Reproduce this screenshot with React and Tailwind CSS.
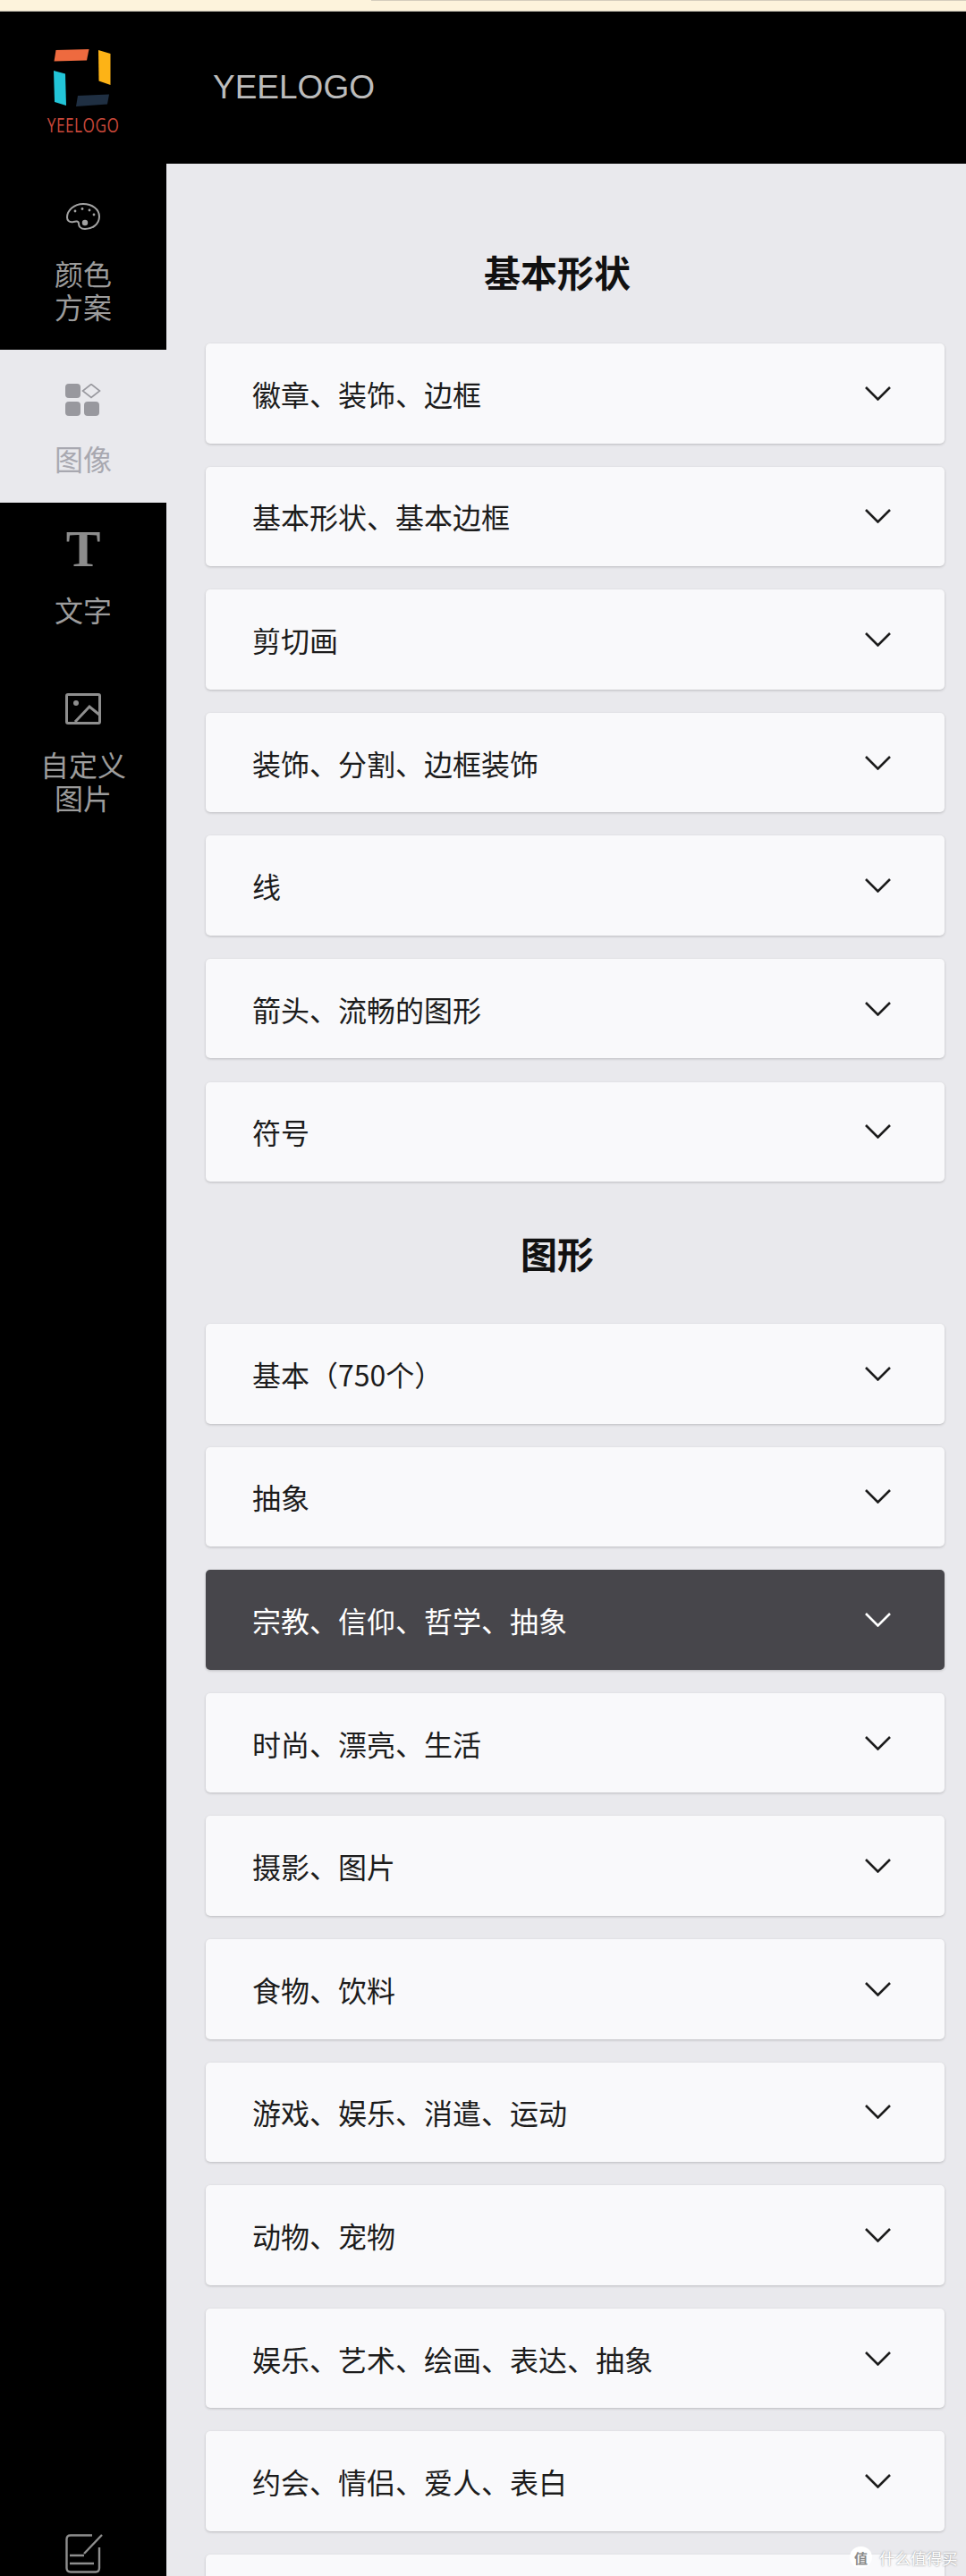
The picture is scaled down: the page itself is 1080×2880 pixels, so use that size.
import React from "react";

const shapeGroups = ["徽章、装饰、边框", "基本形状、基本边框", "剪切画", "装饰、分割、边框装饰", "线", "箭头、流畅的图形", "符号"];
const graphicGroups = [
  "基本（750个）",
  "抽象",
  "宗教、信仰、哲学、抽象",
  "时尚、漂亮、生活",
  "摄影、图片",
  "食物、饮料",
  "游戏、娱乐、消遣、运动",
  "动物、宠物",
  "娱乐、艺术、绘画、表达、抽象",
  "约会、情侣、爱人、表白",
  "",
];

const Logo = () => (
  <svg width="66" height="66" viewBox="0 0 66 66" className="block">
    <polygon points="2.5,1 39.5,0 37,12.5 0.5,13.5" fill="#ee6a3f" />
    <polygon points="50,1 63.5,5 63.5,40 50.5,35.5" fill="#fdb316" />
    <polygon points="0,24 13,27.5 14,63 1,59" fill="#22c5d8" />
    <polygon points="27,52 62,50.5 60,61.5 25,64" fill="#1f2f42" />
  </svg>
);

const PaletteIcon = () => (
  <svg width="38" height="30" viewBox="0 0 38 30" fill="none" className="block">
    <path
      d="M19 1C29 1 37 7 37 15C37 24 29 29 21 29C16 29 14 26 14 23C14 20 11 20 8 21C3 22 1 19 1 16C1 8 9 1 19 1Z"
      stroke="#a3a3a3"
      strokeWidth="2"
    />
    <circle cx="10" cy="9" r="1.4" fill="#a3a3a3" />
    <circle cx="18" cy="6.5" r="1.4" fill="#a3a3a3" />
    <circle cx="26" cy="8" r="1.4" fill="#a3a3a3" />
    <circle cx="31" cy="13" r="1.4" fill="#a3a3a3" />
    <circle cx="21" cy="22" r="3.2" fill="#a3a3a3" />
  </svg>
);

const ShapesIcon = () => (
  <svg width="40" height="37" viewBox="0 0 40 37" className="block">
    <rect x="0" y="0" width="17" height="16" rx="4" fill="#98989e" />
    <rect x="0" y="20" width="17" height="16" rx="4" fill="#98989e" />
    <rect x="21" y="20" width="17" height="16" rx="4" fill="#98989e" />
    <polygon points="29,0.5 38.5,8 29,15.5 19.5,8" fill="none" stroke="#98989e" strokeWidth="1.6" />
  </svg>
);

const ImageIcon = () => (
  <svg width="40" height="35" viewBox="0 0 40 35" fill="none" className="block">
    <rect x="1.5" y="1.5" width="37" height="32" rx="1.5" stroke="#8e8e8e" strokeWidth="3" />
    <circle cx="12" cy="11" r="3" fill="#8e8e8e" />
    <path d="M11 32L27 15L38 24" stroke="#8e8e8e" strokeWidth="3" />
  </svg>
);

const NoteIcon = () => (
  <svg width="42" height="44" viewBox="0 0 42 44" fill="none" className="block">
    <path d="M30 1.5H6Q1.5 1.5 1.5 6V38Q1.5 42.5 6 42.5H34Q38 42.5 38 38V15" stroke="#8e8e8e" strokeWidth="2.4" />
    <path d="M41 1L21 22" stroke="#8e8e8e" strokeWidth="2.4" />
    <path d="M5 24H21M5 33H32" stroke="#8e8e8e" strokeWidth="2.4" />
  </svg>
);

const Chevron = ({ color }) => (
  <svg width="29" height="16" viewBox="0 0 29 16" fill="none" className="block shrink-0">
    <path d="M1 1L14.5 14.5L28 1" stroke={color} strokeWidth="2.6" />
  </svg>
);

const NavLabel = ({ children, className = "" }) => (
  <div className={`text-center text-[32px] leading-[37px] ${className}`}>{children}</div>
);

const GroupCard = ({ label, active }) => (
  <div
    className={`flex h-[111.5px] shrink-0 items-center justify-between rounded-[5px] pl-[52px] pr-[60px] text-[32px] shadow-[0_1px_3px_rgba(0,0,0,0.2)] ${
      active ? "bg-[#47464b] text-white" : "bg-[#f9f9fb] text-[#1c1c1c]"
    }`}
  >
    <span>{label}</span>
    <Chevron color={active ? "#ffffff" : "#1c1c1c"} />
  </div>
);

export default function App() {
  return (
    <div className="relative flex h-[2880px] w-[1080px] flex-col overflow-hidden bg-black font-['Noto_Sans_CJK_SC','Noto_Sans',sans-serif]">
      {/* browser strip at the very top */}
      <div className="flex h-[13px] shrink-0 justify-end border-b border-[#bdb8ab] bg-[#fdf3dc]">
        <div className="h-px w-[665px] bg-[#d5cdbd]" />
      </div>

      {/* Header */}
      <header className="flex h-[170px] shrink-0 items-start bg-black">
        <div className="flex w-[186px] flex-col items-center pt-[42px]">
          <Logo />
          <div className="mt-[6px] font-['Open_Sans',sans-serif] text-[21px] leading-[26px] tracking-[0.6px] text-[#c9483a] [transform:scaleX(0.82)]">
            YEELOGO
          </div>
        </div>
        <div className="ml-[52px] pt-[62px] font-['Liberation_Sans',sans-serif] text-[37px] leading-[46px] text-[#bcbcbc]">
          YEELOGO
        </div>
      </header>

      <div className="flex min-h-0 flex-1">
        {/* Sidebar */}
        <aside className="flex w-[186px] shrink-0 flex-col bg-black text-[#9c9c9c]">
          <div className="flex h-[208px] flex-col items-center pt-[44px]">
            <PaletteIcon />
            <NavLabel className="mt-[30px]">
              颜色
              <br />
              方案
            </NavLabel>
          </div>
          <div className="flex h-[171px] flex-col items-center bg-[#e9e9ed] pt-[38px] text-[#a8a8b0]">
            <ShapesIcon />
            <NavLabel className="mt-[28px]">图像</NavLabel>
          </div>
          <div className="flex h-[171px] flex-col items-center pt-[22px]">
            <div className="h-[60px] font-['Liberation_Serif',serif] text-[58px] font-bold leading-[60px] text-[#8c8c8c]">T</div>
            <NavLabel className="mt-[19px]">文字</NavLabel>
          </div>
          <div className="flex flex-col items-center pt-[42px]">
            <ImageIcon />
            <NavLabel className="mt-[26px]">
              自定义
              <br />
              图片
            </NavLabel>
          </div>
          <div className="mt-auto flex justify-center pb-[3px] pl-[2px]">
            <NoteIcon />
          </div>
        </aside>

        {/* Main list */}
        <main className="flex min-w-0 flex-1 flex-col bg-[#e9e9ed] pl-[44px] pr-[24px] pt-[94px]">
          <h2 className="mb-[55px] pr-[40px] text-center text-[41px] font-bold leading-[52px] text-[#111111]">基本形状</h2>
          <div className="flex flex-col gap-[26.1px]">
            {shapeGroups.map((label) => (
              <GroupCard key={label} label={label} />
            ))}
          </div>
          <h2 className="mb-[54px] mt-[53px] pr-[40px] text-center text-[41px] font-bold leading-[52px] text-[#111111]">图形</h2>
          <div className="flex flex-col gap-[26.1px]">
            {graphicGroups.map((label, i) => (
              <GroupCard key={i} label={label} active={i === 2} />
            ))}
          </div>
        </main>
      </div>

      {/* Watermark over the page */}
      <div className="absolute left-[950px] top-[2847px] flex items-center gap-[8px] text-[17.5px] leading-[23px] text-white [text-shadow:0_0_2px_rgba(90,90,90,0.8)]">
        <div className="flex h-[24px] w-[25px] items-center justify-center rounded-full bg-white text-[15px] font-bold text-[#8a8a8a] [text-shadow:none]">
          值
        </div>
        <span>什么值得买</span>
      </div>
    </div>
  );
}
